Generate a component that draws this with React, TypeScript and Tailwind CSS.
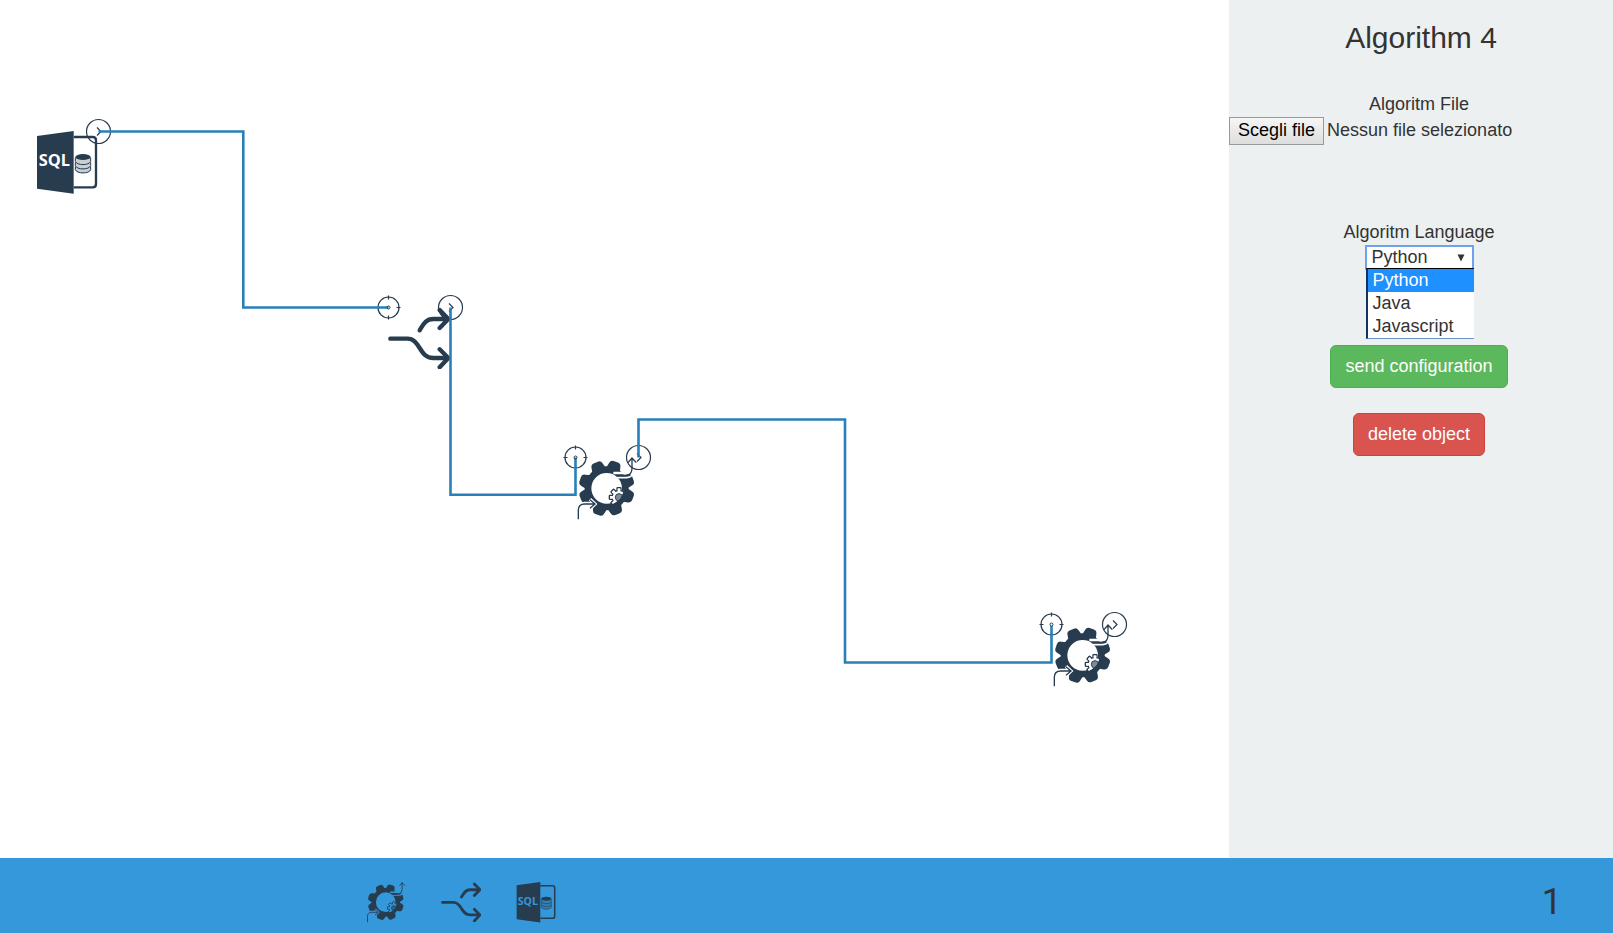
import React from "react";

const INK = "#283c50";

type IconProps = { size: number; backdrop: string };

const TEETH = [-23, 19, 70, 110, 157, 199, 249, 289];
const SMALL_TEETH = [0, 45, 90, 135, 180, 225, 270, 315];

function GearIcon({ size, backdrop }: IconProps) {
  const clipId = React.useId();
  return (
    <svg width={size} height={size} viewBox="0 0 186 186" overflow="visible" fill="none" aria-hidden="true">
      <clipPath id={clipId}>
        <circle cx="92" cy="94" r="50" />
      </clipPath>
      <circle cx="92" cy="94" r="56" stroke={INK} strokeWidth="20" />
      {TEETH.map((angle) => (
        <path
          key={angle}
          d="M70 38 L74 20 Q76 10 85 10 H99 Q108 10 110 20 L114 38 Z"
          fill={INK}
          transform={`rotate(${angle} 92 94)`}
        />
      ))}
      <g clipPath={`url(#${clipId})`}>
        {SMALL_TEETH.map((angle) => (
          <rect
            key={angle}
            x="123"
            y="92"
            width="12"
            height="14"
            rx="2"
            fill={backdrop}
            stroke={INK}
            strokeWidth="4"
            transform={`rotate(${angle} 129 121)`}
          />
        ))}
        <circle cx="129" cy="121" r="21" fill={backdrop} stroke={INK} strokeWidth="4" />
        {SMALL_TEETH.map((angle) => (
          <rect
            key={angle}
            x="125"
            y="96"
            width="8"
            height="12"
            fill={backdrop}
            transform={`rotate(${angle} 129 121)`}
          />
        ))}
        <circle cx="129" cy="121" r="11" fill={INK} fillOpacity="0.6" stroke={INK} strokeWidth="3" />
      </g>
      <path d="M7 187 V160 Q7 141 26 141 H55" stroke={backdrop} strokeWidth="14" />
      <path d="M42 127 L57 141 L42 155" stroke={backdrop} strokeWidth="10" />
      <path d="M112 48 H150 Q160 48 164 36" stroke={backdrop} strokeWidth="7" />
      <path d="M120 62 H152 Q172 60 174 40" stroke={backdrop} strokeWidth="5" />
      <path d="M7 187 V160 Q7 141 26 141 H55 M42 128 L57 141 L42 154" stroke={INK} strokeWidth="4" />
      <path d="M120 56 H150 Q168 54 168 34 V3 M156 17 L168 3 L181 17" stroke={INK} strokeWidth="4" />
    </svg>
  );
}

function SplitIcon({ size }: { size: number }) {
  return (
    <svg
      width={size}
      height={size}
      viewBox="0 0 186 186"
      fill="none"
      stroke={INK}
      strokeWidth="13"
      strokeLinecap="round"
      strokeLinejoin="round"
      aria-hidden="true"
    >
      <path d="M7 95 H58 C98 95 92 153 136 153 H178" />
      <path d="M155 127 L181 153 L155 181" />
      <path d="M95 70 C105 54 112 36 136 36 H178" />
      <path d="M155 9 L181 36 L155 63" />
    </svg>
  );
}

function SqlIcon({ size, backdrop }: IconProps) {
  return (
    <svg width={size} height={size} viewBox="0 0 186 186" overflow="visible" fill="none" aria-hidden="true">
      <path d="M113 18 H170 Q180 18 180 28 V159 Q180 169 170 169 H113" stroke={INK} strokeWidth="7" />
      <path d="M3 15 L113 0 V188 L3 173 Z" fill={INK} />
      <text x="8" y="106" fontSize="49" fontWeight="700" fontFamily="'Open Sans', 'Noto Sans', sans-serif" fill={backdrop}>
        SQL
      </text>
      <path d="M118 78 V118 C122 130 160 130 164 118 V78 Z" fill={INK} fillOpacity="0.25" />
      <ellipse cx="141" cy="78" rx="23" ry="9" fill={INK} />
      <path
        d="M118 80 V91 C122 104 160 104 164 91 V80 M118 94 V104 C122 117 160 117 164 104 V94 M118 107 V116 C122 129 160 129 164 116 V107"
        stroke={INK}
        strokeWidth="3"
      />
    </svg>
  );
}

function InPort({ x, y }: { x: number; y: number }) {
  return (
    <g transform={`translate(${x} ${y})`} stroke={INK} strokeWidth="1.2" fill="none">
      <circle r="10.5" />
      <path d="M0 -12 V-8 M0 8 V12 M-12 0 H-8 M8 0 H12" />
    </g>
  );
}

function OutPort({ x, y }: { x: number; y: number }) {
  return (
    <g transform={`translate(${x} ${y})`} stroke={INK} strokeWidth="1.2" fill="none">
      <circle r="12" />
      <path d="M-1.5 -4 L2.5 0 L-1.5 4" />
    </g>
  );
}

function Canvas() {
  return (
    <main className="relative min-w-0 flex-1 overflow-hidden bg-white">
      <div className="absolute left-[36px] top-[131px]">
        <SqlIcon size={62} backdrop="#ffffff" />
      </div>
      <div className="absolute left-[388px] top-[307px]">
        <SplitIcon size={62} />
      </div>
      <div className="absolute left-[576px] top-[457px]">
        <GearIcon size={62} backdrop="#ffffff" />
      </div>
      <div className="absolute left-[1052px] top-[624px]">
        <GearIcon size={62} backdrop="#ffffff" />
      </div>
      <svg className="absolute inset-0 h-full w-full" aria-hidden="true">
        <OutPort x={98.5} y={131.5} />
        <InPort x={388.5} y={307.5} />
        <OutPort x={450.5} y={307.5} />
        <InPort x={575.5} y={457.5} />
        <OutPort x={638.5} y={457.5} />
        <InPort x={1051.5} y={624.5} />
        <OutPort x={1114.5} y={624.5} />
        <g fill="none" stroke="#2980b9" strokeWidth="2.6">
          <path d="M98.5 131.5 H243.3 V307.5 H388.5" />
          <path d="M450.5 307.5 V494.8 H575.5 V457.5" />
          <path d="M638.5 457.5 V419.5 H845 V662.5 H1051.5 V624.5" />
        </g>
        <g fill="none" stroke={INK}>
          <circle cx="388.5" cy="307.5" r="1.5" />
          <circle cx="575.5" cy="457.5" r="1.5" />
          <circle cx="1051.5" cy="624.5" r="1.5" fill="#ffffff" />
        </g>
      </svg>
    </main>
  );
}

const LANGUAGES = ["Python", "Java", "Javascript"];

function Sidebar() {
  return (
    <aside className="flex w-[384px] shrink-0 flex-col bg-[#ecf0f1] pt-[21px] text-[18px] leading-[26px] text-[#333333]">
      <h2 className="text-center text-[30px] leading-[33px]">Algorithm 4</h2>

      <form className="mt-[37px] flex flex-col items-center pr-1">
        <label htmlFor="algorithm-file">Algoritm File</label>
        <div className="relative flex w-full items-start gap-[3px]">
          <span className="border border-[#999999] bg-linear-to-b from-[#f6f6f6] to-[#dddddd] px-2 pb-0.5 leading-6 text-black">
            Scegli file
          </span>
          <span>Nessun file selezionato</span>
          <input id="algorithm-file" type="file" className="absolute inset-0 h-full w-full opacity-0" />
        </div>

        <label htmlFor="algorithm-language" className="mt-[74px]">
          Algoritm Language
        </label>
        <div className="relative">
          <select
            id="algorithm-language"
            defaultValue="Python"
            className="block h-[25px] w-[109px] appearance-none border-2 border-[#6ea2ec] bg-white pl-[5px] leading-[21px] outline-none"
          >
            {LANGUAGES.map((language) => (
              <option key={language}>{language}</option>
            ))}
          </select>
          <svg className="pointer-events-none absolute right-[9px] top-[9px]" width="8" height="8" viewBox="0 0 8 8" aria-hidden="true">
            <path d="M0.5 0.5 H7.5 L4 7.5 Z" fill="#333333" />
          </svg>
          <ul
            role="listbox"
            aria-label="Algoritm Language"
            className="absolute left-px right-0 top-[23px] border-b border-l-2 border-t border-b-[#6a94d4] border-l-[#17335f] border-t-black bg-white leading-[22px]"
          >
            {LANGUAGES.map((language, index) => (
              <li
                key={language}
                role="option"
                aria-selected={index === 0}
                className="h-[23px] pl-[5px] aria-selected:bg-[#1e90ff] aria-selected:text-white"
              >
                {language}
              </li>
            ))}
          </ul>
        </div>

        <button
          type="button"
          className="mt-[75px] rounded-md border border-[#4cae4c] bg-[#5cb85c] px-[14px] py-2 leading-[25px] text-white"
        >
          send configuration
        </button>
        <button
          type="button"
          className="mt-[25px] rounded-md border border-[#d43f3a] bg-[#d9534f] px-[14px] py-2 leading-[25px] text-white"
        >
          delete object
        </button>
      </form>
    </aside>
  );
}

function Toolbar() {
  return (
    <footer className="flex h-[75px] shrink-0 items-center justify-between bg-[#3498db] pl-[366px] pr-[51px]">
      <div className="flex gap-[35px] pt-3">
        <button type="button" aria-label="Add algorithm">
          <GearIcon size={40} backdrop="#3498db" />
        </button>
        <button type="button" aria-label="Add split">
          <SplitIcon size={40} />
        </button>
        <button type="button" aria-label="Add database">
          <SqlIcon size={40} backdrop="#3498db" />
        </button>
      </div>
      <span className="pt-3 font-[Roboto,sans-serif] text-[36px] leading-[40px] text-[#333333]">1</span>
    </footer>
  );
}

export default function App() {
  return (
    <div className="flex min-h-screen flex-col font-['Liberation_Sans',Arial,sans-serif]">
      <div className="flex flex-1">
        <Canvas />
        <Sidebar />
      </div>
      <Toolbar />
    </div>
  );
}
